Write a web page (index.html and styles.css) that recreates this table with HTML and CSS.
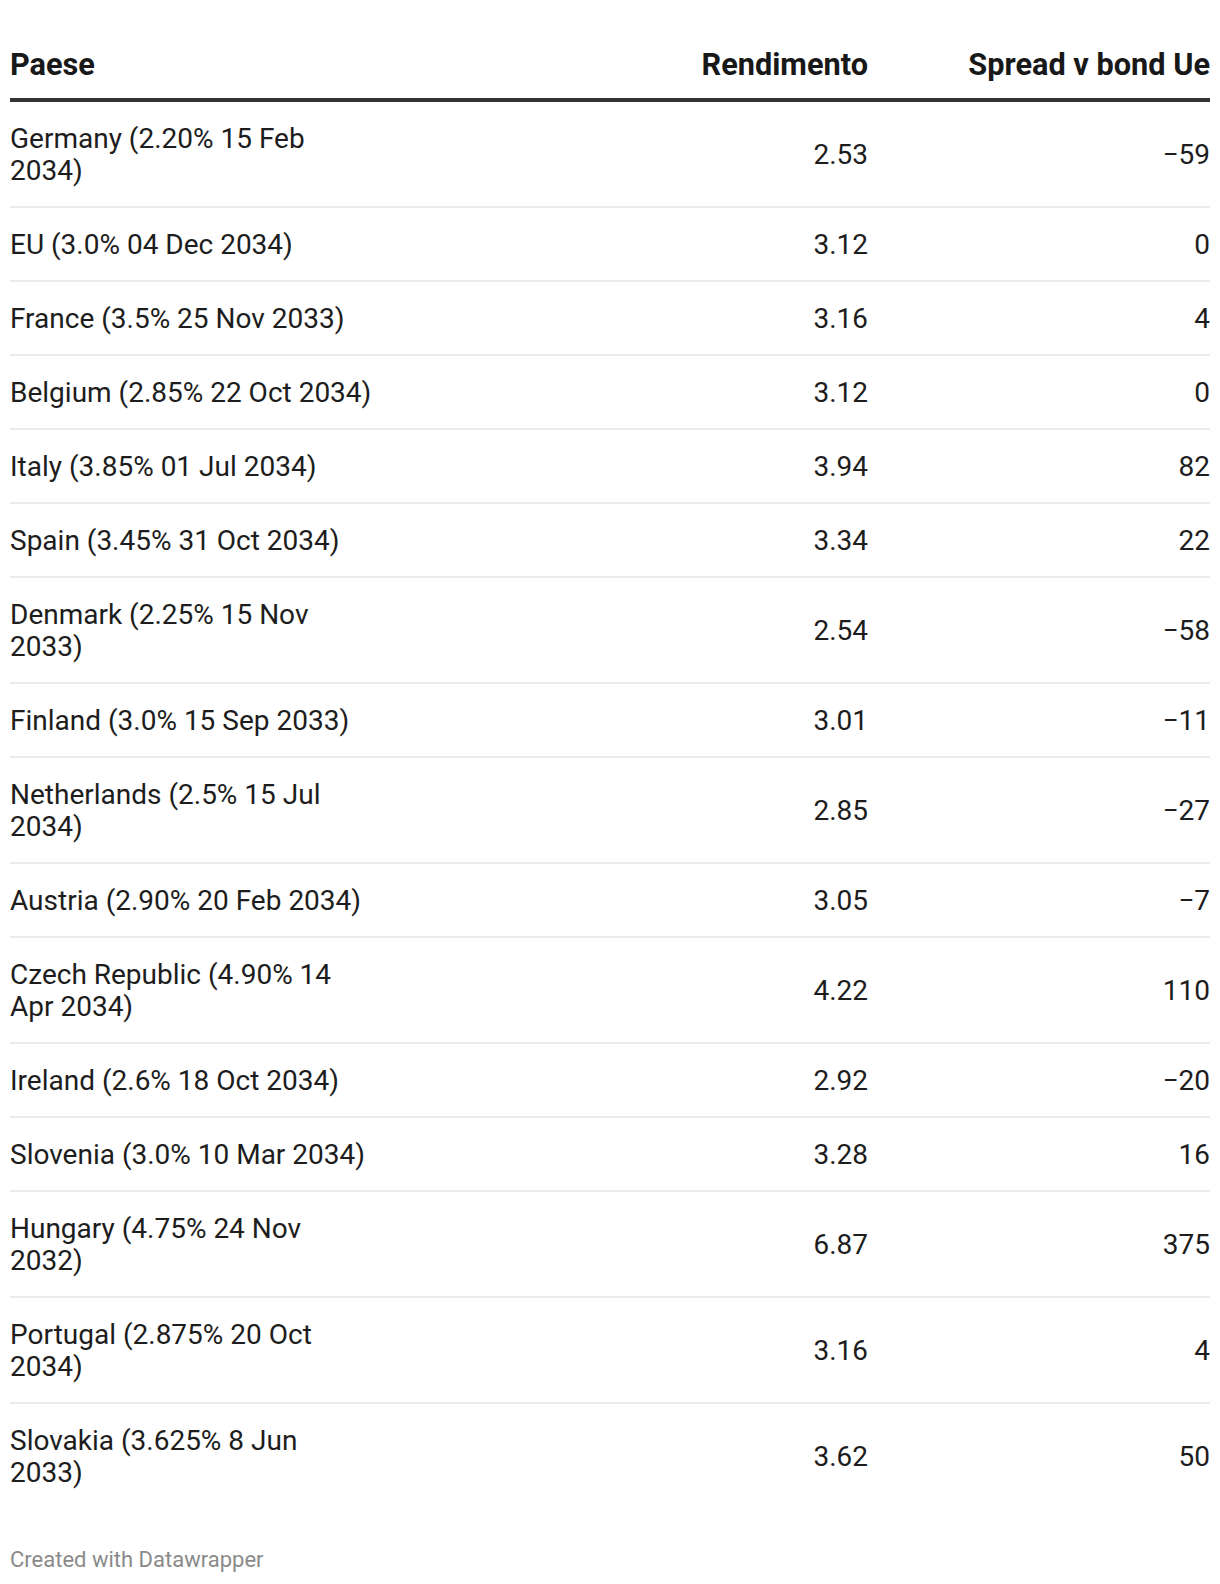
FILE: index.html
```html
<!DOCTYPE html>
<html lang="it">
<head>
<meta charset="utf-8">
<title>Rendimenti bond</title>
<link rel="stylesheet" href="styles.css">
</head>
<body>
<div class="wrap">
  <table class="tbl">
    <colgroup>
      <col class="c-name">
      <col class="c-yield">
      <col class="c-spread">
    </colgroup>
    <thead>
      <tr>
        <th class="left">Paese</th>
        <th class="num">Rendimento</th>
        <th class="num">Spread v bond Ue</th>
      </tr>
    </thead>
    <tbody>
      <tr><td>Germany (2.20% 15 Feb 2034)</td><td class="num">2.53</td><td class="num">&minus;59</td></tr>
      <tr><td>EU (3.0% 04 Dec 2034)</td><td class="num">3.12</td><td class="num">0</td></tr>
      <tr><td>France (3.5% 25 Nov 2033)</td><td class="num">3.16</td><td class="num">4</td></tr>
      <tr><td>Belgium (2.85% 22 Oct 2034)</td><td class="num">3.12</td><td class="num">0</td></tr>
      <tr><td>Italy (3.85% 01 Jul 2034)</td><td class="num">3.94</td><td class="num">82</td></tr>
      <tr><td>Spain (3.45% 31 Oct 2034)</td><td class="num">3.34</td><td class="num">22</td></tr>
      <tr><td>Denmark (2.25% 15 Nov 2033)</td><td class="num">2.54</td><td class="num">&minus;58</td></tr>
      <tr><td>Finland (3.0% 15 Sep 2033)</td><td class="num">3.01</td><td class="num">&minus;11</td></tr>
      <tr><td>Netherlands (2.5% 15 Jul 2034)</td><td class="num">2.85</td><td class="num">&minus;27</td></tr>
      <tr><td>Austria (2.90% 20 Feb 2034)</td><td class="num">3.05</td><td class="num">&minus;7</td></tr>
      <tr><td>Czech Republic (4.90% 14 Apr 2034)</td><td class="num">4.22</td><td class="num">110</td></tr>
      <tr><td>Ireland (2.6% 18 Oct 2034)</td><td class="num">2.92</td><td class="num">&minus;20</td></tr>
      <tr><td>Slovenia (3.0% 10 Mar 2034)</td><td class="num">3.28</td><td class="num">16</td></tr>
      <tr><td>Hungary (4.75% 24 Nov 2032)</td><td class="num">6.87</td><td class="num">375</td></tr>
      <tr><td>Portugal (2.875% 20 Oct 2034)</td><td class="num">3.16</td><td class="num">4</td></tr>
      <tr><td>Slovakia (3.625% 8 Jun 2033)</td><td class="num">3.62</td><td class="num">50</td></tr>
    </tbody>
  </table>
  <div class="footer">Created with Datawrapper</div>
</div>
</body>
</html>
```

FILE: styles.css
```css
html, body {
  margin: 0;
  padding: 0;
  background: #ffffff;
}

body {
  font-family: Roboto, "Liberation Sans", sans-serif;
  color: #1d1d1d;
}

.wrap {
  padding: 20px 10px 0 10px;
}

.tbl {
  width: 1200px;
  border-collapse: collapse;
  table-layout: fixed;
}

.c-name { width: 365px; }
.c-yield { width: 493px; }
.c-spread { width: 342px; }

.tbl th {
  font-size: 30.7px;
  font-weight: 700;
  line-height: 36px;
  color: #181818;
  padding: 27px 0 15px 0;
  border-bottom: 4px solid #333333;
  vertical-align: bottom;
}

.tbl th.left { text-align: left; }

.tbl td {
  font-size: 28px;
  line-height: 32px;
  padding: 21px 0 19px 0;
  vertical-align: middle;
  text-align: left;
  border-bottom: 2px solid #ebebeb;
}

.tbl tbody tr:last-child td {
  border-bottom: none;
}

.tbl .num {
  text-align: right;
  font-variant-numeric: tabular-nums;
}

.footer {
  margin-top: 39px;
  font-size: 22px;
  line-height: 26px;
  color: #8a8a8a;
}
```
